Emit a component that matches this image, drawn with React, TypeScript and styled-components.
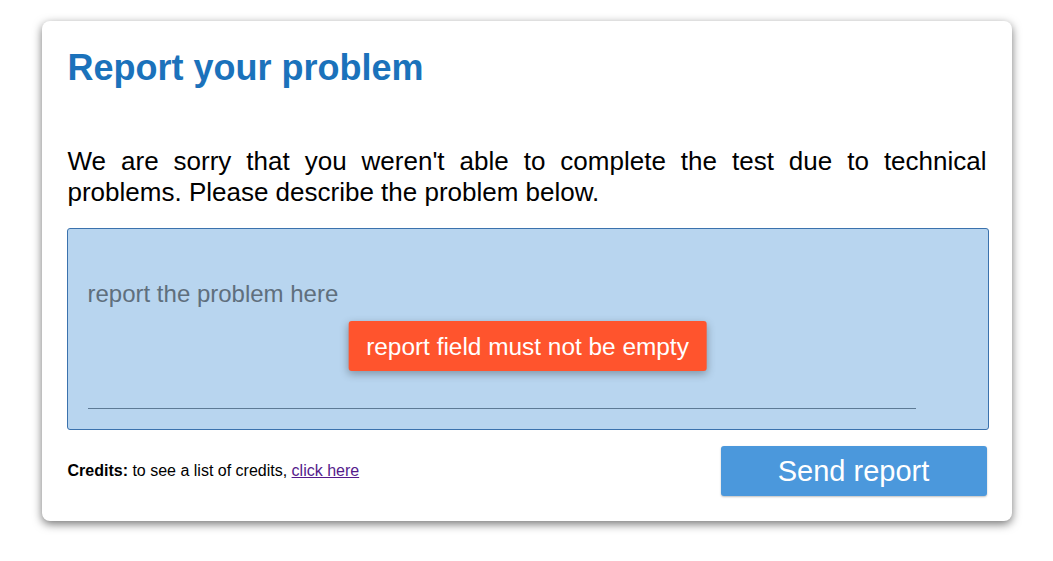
import React from "react";
import styled, { createGlobalStyle } from "styled-components";

const Global = createGlobalStyle`
  html, body { margin: 0; padding: 0; background: #ffffff; }
  body { font-family: "Liberation Sans", Arial, sans-serif; }
  * { box-sizing: border-box; }
`;

const Page = styled.div`
  display: flex;
  justify-content: center;
  padding-top: 21px;
  padding-bottom: 20px;
`;

const Card = styled.div`
  width: 970px;
  height: 500px;
  background: #ffffff;
  border-radius: 8px;
  box-shadow: 0 3px 10px rgba(0, 0, 0, 0.55);
  padding: 26px 25px 25px 25px;
  display: flex;
  flex-direction: column;
`;

const Content = styled.div`
  width: 920px;
  display: flex;
  flex-direction: column;
`;

const Title = styled.h1`
  margin: 0 0 0 1px;
  font-family: "Liberation Sans", Arial, sans-serif;
  font-weight: 700;
  font-size: 36px;
  line-height: 41px;
  color: #1b72bb;
`;

const Intro = styled.p`
  margin: 58px 0 0 1px;
  font-size: 26px;
  line-height: 31px;
  color: #000000;
  text-align: justify;
`;

const Box = styled.div`
  position: relative;
  margin-top: 20px;
  width: calc(100% + 2px);
  height: 202px;
  background: #b8d5ef;
  border: 1px solid #3b72ad;
  border-radius: 3px;
  padding: 20px;
`;

const Field = styled.textarea`
  display: block;
  width: 828px;
  height: 160px;
  padding: 31px 0 0 0;
  margin: 0;
  border: none;
  border-bottom: 1px solid #5d7a95;
  background: transparent;
  resize: none;
  outline: none;
  font-family: "Liberation Sans", Arial, sans-serif;
  font-size: 24px;
  line-height: 28px;
  color: #333;
  &::placeholder {
    color: #5f6f7d;
    opacity: 1;
  }
`;

const Tooltip = styled.div`
  position: absolute;
  top: 92px;
  left: 50%;
  transform: translateX(-50%);
  height: 50px;
  padding: 1px 18px 0 18px;
  display: flex;
  align-items: center;
  background: #ff542d;
  color: #ffffff;
  border-radius: 3px;
  font-size: 24.4px;
  white-space: nowrap;
  box-shadow: 0 3px 8px rgba(0, 0, 0, 0.3);
`;

const Footer = styled.div`
  margin-top: 16px;
  display: flex;
  align-items: center;
  justify-content: space-between;
`;

const Credits = styled.div`
  font-size: 16px;
  color: #000;
  padding-left: 1px;
`;

const Link = styled.a`
  color: #551a8b;
  text-decoration: underline;
`;

const SendButton = styled.button`
  width: 266px;
  height: 50px;
  border: none;
  border-radius: 3px;
  background: #4b98dc;
  color: #ffffff;
  font-family: "Liberation Sans", Arial, sans-serif;
  font-size: 29px;
  box-shadow: 0 1px 2px rgba(0, 0, 0, 0.25);
  cursor: pointer;
  padding: 0;
`;

export default function App() {
  return (
    <>
      <Global />
      <Page>
        <Card>
          <Content>
            <Title>Report your problem</Title>
            <Intro>
              We are sorry that you weren't able to complete the test due to technical
              problems. Please describe the problem below.
            </Intro>
            <Box>
              <Field placeholder="report the problem here" />
              <Tooltip>report field must not be empty</Tooltip>
            </Box>
            <Footer>
              <Credits>
                <b>Credits:</b> to see a list of credits, <Link href="#">click here</Link>
              </Credits>
              <SendButton>Send report</SendButton>
            </Footer>
          </Content>
        </Card>
      </Page>
    </>
  );
}
